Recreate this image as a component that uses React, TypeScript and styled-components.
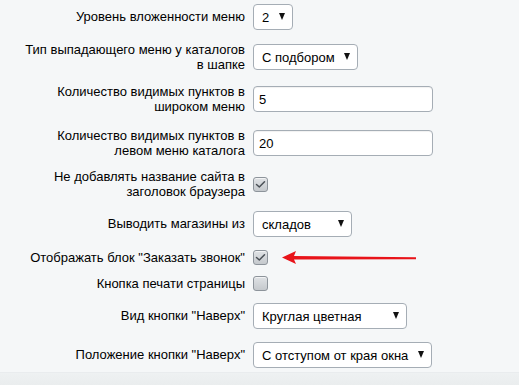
import React from "react";
import styled, { createGlobalStyle } from "styled-components";

const Global = createGlobalStyle`
  html, body { margin: 0; padding: 0; background: #f5f7f8; }
  body { font-family: Arial, "Liberation Sans", Helvetica, sans-serif; font-size: 13px; color: #000; }
`;

const Page = styled.div`
  position: relative;
  width: 519px;
  height: 385px;
  background: #f5f7f8;
  overflow: hidden;
`;

const Form = styled.div`
  display: flex;
  flex-direction: column;
  height: 372px;
`;

const Footer = styled.div`
  height: 13px;
  background: linear-gradient(#eef1f2, #eaedee);
  border-top: 1px solid #e9ecee;
  box-sizing: border-box;
`;

const Row = styled.div<{ $top: number }>`
  display: grid;
  grid-template-columns: 245px auto;
  column-gap: 8px;
  align-items: center;
  margin-top: ${(p) => p.$top}px;
`;

const Label = styled.div`
  text-align: right;
  line-height: 15.5px;
  color: #000;
`;

const Control = styled.div`
  display: flex;
  align-items: center;
`;

const SelectBox = styled.div<{ $w: number }>`
  width: ${(p) => p.$w}px;
  height: 26px;
  box-sizing: border-box;
  border: 1px solid #a5adb5;
  border-radius: 4px;
  background: #fff;
  display: flex;
  align-items: center;
  justify-content: space-between;
  padding: 0 7px 0 8px;
  font-size: 13px;
  color: #000;
`;

const Arrow = styled.span`
  width: 0;
  height: 0;
  border-left: 3.5px solid transparent;
  border-right: 3.5px solid transparent;
  border-top: 7px solid #111;
  margin-top: -2px;
`;

const TextInput = styled.div`
  width: 180px;
  height: 26px;
  box-sizing: border-box;
  border: 1px solid #a5adb5;
  border-radius: 4px;
  background: #fff;
  display: flex;
  align-items: center;
  padding-left: 5px;
  box-shadow: inset 0 1px 1px rgba(0, 0, 0, 0.06);
`;

const Check = styled.div`
  width: 15px;
  height: 15px;
  box-sizing: border-box;
  border: 1px solid #8d949b;
  border-radius: 3px;
  background: linear-gradient(#dfe2e5, #c5c9cd);
  box-shadow: inset 0 1px 0 rgba(255, 255, 255, 0.6);
  display: flex;
  align-items: center;
  justify-content: center;
`;

const Pointer = styled.svg`
  position: absolute;
  left: 280px;
  top: 249px;
`;

type Item =
  | { label: string[]; top: number; kind: "select"; value: string; w: number }
  | { label: string[]; top: number; kind: "input"; value: string }
  | { label: string[]; top: number; kind: "check"; checked: boolean };

const items: Item[] = [
  { label: ["Уровень вложенности меню"], top: 4, kind: "select", value: "2", w: 40 },
  { label: ["Тип выпадающего меню у каталогов", "в шапке"], top: 11.5, kind: "select", value: "С подбором", w: 105 },
  { label: ["Количество видимых пунктов в", "широком меню"], top: 11, kind: "input", value: "5" },
  { label: ["Количество видимых пунктов в", "левом меню каталога"], top: 13, kind: "input", value: "20" },
  { label: ["Не добавлять название сайта в", "заголовок браузера"], top: 10, kind: "check", checked: true },
  { label: ["Выводить магазины из"], top: 11.5, kind: "select", value: "складов", w: 99 },
  { label: ['Отображать блок "Заказать звонок"'], top: 12.5, kind: "check", checked: true },
  { label: ["Кнопка печати страницы"], top: 11, kind: "check", checked: false },
  { label: ['Вид кнопки "Наверх"'], top: 11.5, kind: "select", value: "Круглая цветная", w: 154 },
  { label: ['Положение кнопки "Наверх"'], top: 13, kind: "select", value: "С отступом от края окна", w: 179 },
];

function Tick() {
  return (
    <svg width="11" height="9" viewBox="0 0 11 9">
      <path d="M1.5 4.5 L4.3 7 L9.5 1.8" fill="none" stroke="#4a5056" strokeWidth="1.5" strokeLinecap="round" strokeLinejoin="round" />
    </svg>
  );
}

function renderControl(it: Item) {
  if (it.kind === "select")
    return (
      <SelectBox $w={it.w}>
        <span>{it.value}</span>
        <Arrow />
      </SelectBox>
    );
  if (it.kind === "input") return <TextInput>{it.value}</TextInput>;
  return <Check>{it.checked ? <Tick /> : null}</Check>;
}

export default function App() {
  return (
    <Page>
      <Global />
      <Form>
        {items.map((it, i) => (
          <Row key={i} $top={it.top}>
            <Label>
              {it.label.map((l, j) => (
                <div key={j}>{l}</div>
              ))}
            </Label>
            <Control>{renderControl(it)}</Control>
          </Row>
        ))}
      </Form>
      <Footer />
      <Pointer width="140" height="18" viewBox="0 0 140 18">
        <polygon points="2,8.5 16,2 14,7 136,8.3 136,10.3 14,10.5 16,15" fill="#e8141a" />
      </Pointer>
    </Page>
  );
}
